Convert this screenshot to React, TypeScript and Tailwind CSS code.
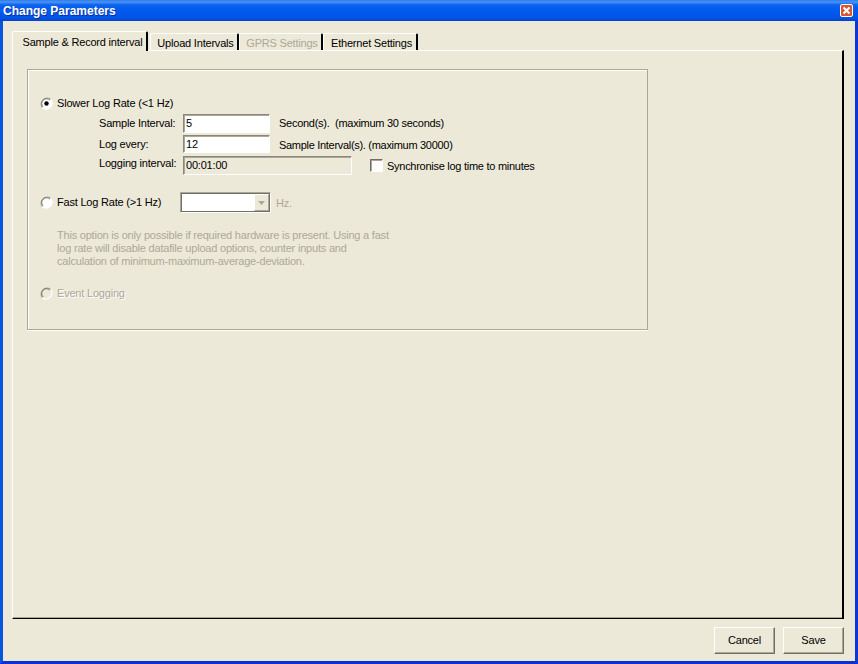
import React from 'react';

const font = { fontFamily: '"Liberation Sans", Arial, sans-serif' };

function Radio({ checked, disabled }: { checked?: boolean; disabled?: boolean }) {
    return (
        <svg width="13" height="13" viewBox="0 0 13 13" className="shrink-0">
            <circle cx="6.5" cy="6.5" r="6" fill={disabled ? '#ece9d8' : '#ffffff'} />
            <path d="M10.7 2.3 A6 6 0 0 0 2.3 10.7" fill="none" stroke="#aca899" strokeWidth="1.3" />
            <path d="M9.9 3.1 A4.8 4.8 0 0 0 3.1 9.9" fill="none" stroke="#716f64" strokeWidth="1" />
            <path d="M2.3 10.7 A6 6 0 0 0 10.7 2.3" fill="none" stroke="#ffffff" strokeWidth="1.3" />
            {checked && <circle cx="6.5" cy="6.5" r="2.2" fill="#000000" />}
        </svg>
    );
}

function Tab({ label, disabled }: { label: string; disabled?: boolean }) {
    return (
        <div
            className={`h-[17px] pt-[2px] pl-[3px] flex items-center justify-center border-t border-l border-white border-r-2 border-r-black rounded-t-[2px] ${disabled ? 'text-[#aca899]' : 'text-black'}`}
        >
            <span className="whitespace-nowrap">{label}</span>
        </div>
    );
}

const inset = 'border border-t-[#8a8778] border-l-[#8a8778] border-r-white border-b-white shadow-[inset_1px_1px_0_#aca899]';

function XpButton({ label }: { label: string }) {
    return (
        <button className="w-[61px] h-[27px] bg-[#ece9d8] text-black border border-t-white border-l-white border-r-[#716f64] border-b-[#716f64] shadow-[inset_-1px_-1px_0_#aca899] flex items-center justify-center">
            {label}
        </button>
    );
}

export default function App() {
    return (
        <div className="w-[858px] h-[664px] flex flex-col overflow-hidden text-[11px] tracking-[-0.2px] leading-[13px] bg-[#ece9d8]" style={font}>
            {/* Title bar */}
            <div className="h-[21px] shrink-0 flex items-center justify-between pl-[3px] pr-[5px] bg-[linear-gradient(180deg,#2f7cf0_0px,#4a93f5_2px,#0a62ee_5px,#0058ee_12px,#0055e5_18px,#0a3fd0_21px)]">
                <span className="text-white font-bold text-[12px] tracking-normal pt-[2px] [text-shadow:1px_1px_0_#0a2f9f]">Change Parameters</span>
                <svg width="13" height="13" viewBox="0 0 13 13">
                    <rect x="0.5" y="0.5" width="12" height="12" rx="1.5" fill="#d9572f" stroke="#ffffff" />
                    <path d="M3.5 3.5 L9.5 9.5 M9.5 3.5 L3.5 9.5" stroke="#ffffff" strokeWidth="2" />
                </svg>
            </div>

            {/* Window body */}
            <div className="flex-1 flex flex-col bg-[#ece9d8] border-x-[3px] border-b-[3px] border-l-[#0855e0] border-r-[#0838d8] border-b-[#0831d9]">
                <div className="h-[20px] mt-[10px] ml-[9px] flex items-end -mb-px relative z-10 shrink-0">
                    <div className="h-[20px] w-[136px] pt-[2px] pl-[6px] flex items-center justify-center border-t border-l border-white border-r-2 border-r-black rounded-t-[2px] bg-[#ece9d8] text-black mr-[2px]">
                        <span className="whitespace-nowrap">Sample &amp; Record interval</span>
                    </div>
                    <div className="mb-px flex">
                        <div className="w-[89px]"><Tab label="Upload Intervals" /></div>
                        <div className="w-[84px]"><Tab label="GPRS Settings" disabled /></div>
                        <div className="w-[95px]"><Tab label="Ethernet Settings" /></div>
                    </div>
                </div>

                <div className="ml-[9px] w-[832px] h-[569px] shrink-0 border-t border-l border-t-white border-l-white border-r-2 border-b border-r-black border-b-black shadow-[inset_0_-1px_0_#aca899] pt-[18px] pl-[14px]">
                    {/* Group box */}
                    <div className="w-[621px] h-[261px] border border-[#aca899] shadow-[0_1px_0_#ffffff,inset_1px_1px_0_#ffffff] pl-[12px] pt-[25px]">
                        <div className="h-[16px] flex items-center gap-[4px] text-black">
                            <Radio checked />
                            <span>Slower Log Rate (&lt;1 Hz)</span>
                        </div>

                        <div className="ml-[59px] mt-[3px] h-[19px] flex items-center">
                            <span className="w-[84px]">Sample Interval:</span>
                            <div className={`w-[87px] h-[19px] bg-white pl-[2px] flex items-center ${inset}`}>5</div>
                            <span className="ml-[9px] tracking-[-0.27px]">Second(s).&nbsp; (maximum 30 seconds)</span>
                        </div>
                        <div className="ml-[59px] mt-[2px] h-[18px] flex items-center">
                            <span className="w-[84px]">Log every:</span>
                            <div className={`w-[87px] h-[18px] bg-white pl-[2px] flex items-center ${inset}`}>12</div>
                            <span className="ml-[9px] pt-[2px] tracking-[-0.3px]">Sample Interval(s). (maximum 30000)</span>
                        </div>
                        <div className="ml-[59px] mt-[3px] h-[19px] flex items-center">
                            <span className="w-[84px] -mt-[4px]">Logging interval:</span>
                            <div className={`w-[169px] h-[19px] pl-[2px] flex items-center ${inset}`}>00:01:00</div>
                            <div className="ml-[18px] w-[13px] h-[13px] bg-white border border-t-[#716f64] border-l-[#716f64] border-r-white border-b-white shadow-[inset_1px_1px_0_#aca899]" />
                            <span className="ml-[4px] pt-[2px] tracking-[-0.27px]">Synchronise log time to minutes</span>
                        </div>

                        <div className="mt-[17px] h-[21px] flex items-center">
                            <Radio />
                            <span className="ml-[4px] w-[123px]">Fast Log Rate (&gt;1 Hz)</span>
                            <div className="w-[91px] h-[21px] border border-t-[#aca899] border-l-[#aca899] border-r-white border-b-white">
                                <div className="h-full bg-white border border-[#716f64] flex items-center justify-end">
                                    <div className="w-[15px] h-full flex items-center justify-center bg-[#ece9d8] border border-t-white border-l-white border-r-[#aca899] border-b-[#aca899]">
                                        <svg width="7" height="4" viewBox="0 0 7 4"><path d="M0 0H7L3.5 4Z" fill="#aca899" /></svg>
                                    </div>
                                </div>
                            </div>
                            <span className="ml-[5px] pt-[2px] text-[#aca899]">Hz.</span>
                        </div>

                        <div className="ml-[17px] mt-[16px] w-[340px] text-[#aca899]">
                            <p className="whitespace-nowrap tracking-[-0.21px]">This option is only possible if required hardware is present. Using a fast</p>
                            <p className="whitespace-nowrap">log rate will disable datafile upload options, counter inputs and</p>
                            <p className="whitespace-nowrap">calculation of minimum-maximum-average-deviation.</p>
                        </div>

                        <div className="mt-[17px] h-[16px] flex items-center gap-[4px] text-[#aca899] [text-shadow:1px_1px_0_#ffffff]">
                            <Radio disabled />
                            <span>Event Logging</span>
                        </div>
                    </div>
                </div>

                {/* Footer buttons */}
                <div className="flex-1 flex justify-end gap-[8px] pr-[11px] pt-[8px]">
                    <XpButton label="Cancel" />
                    <XpButton label="Save" />
                </div>
            </div>
        </div>
    );
}
